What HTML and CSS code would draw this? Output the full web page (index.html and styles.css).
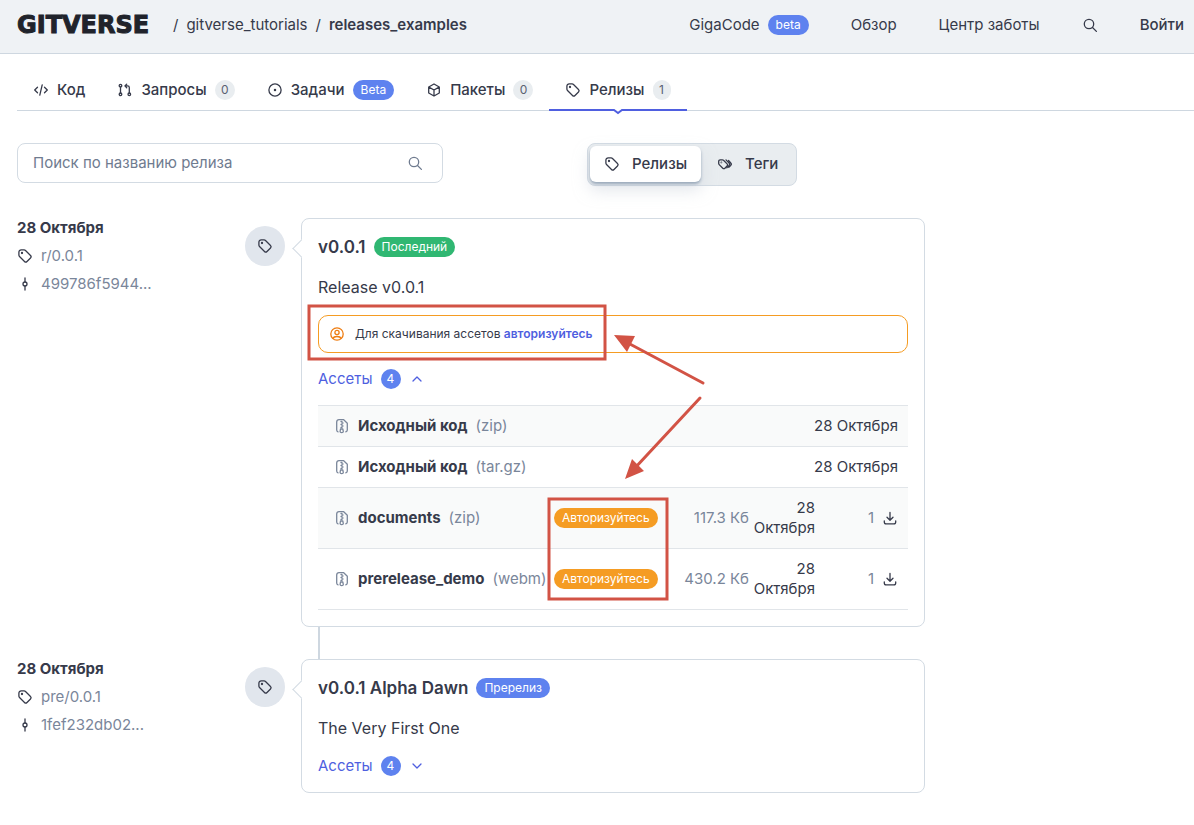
FILE: index.html
```html
<!DOCTYPE html>
<html lang="ru">
<head>
<meta charset="utf-8">
<meta name="viewport" content="width=device-width, initial-scale=1">
<title>releases_examples — Релизы</title>
<link rel="stylesheet" href="styles.css">
</head>
<body>
<svg class="sprite" aria-hidden="true">
  <symbol id="tag" viewBox="0 0 16 16"><path d="M1.900 4.200v2.900c0 .5.2 1 .6 1.400l5 5c.7.7 1.800.7 2.500 0l3.500-3.500c.7-.7.7-1.800 0-2.500l-5-5c-.4-.4-.9-.6-1.400-.6H4.200a2.300 2.300 0 0 0-2.300 2.300z"/><circle cx="5" cy="5" r=".5" fill="currentColor"/></symbol>
  <symbol id="tags" viewBox="0 0 16 16"><path d="M1.700 5.300v2.200c0 .4.200.8.500 1.100l3.600 3.600c.6.6 1.500.6 2.100 0l2.200-2.200c.6-.6.6-1.500 0-2.100L6.500 4.300c-.3-.3-.7-.5-1.100-.5H3.200c-.8 0-1.500.7-1.500 1.500z"/><path d="M9 3.900l3.100 3.200c.7.7.7 1.600 0 2.300l-2.300 2.300M11.500 4.500l2.100 2.200c.9.900.9 2 0 2.900l-1.800 1.800"/><circle cx="4.400" cy="6.400" r=".2"/></symbol>
  <symbol id="search" viewBox="0 0 16 16"><circle cx="7" cy="7" r="4.700"/><path d="M10.500 10.500l3.900 3.900"/></symbol>
  <symbol id="commit" viewBox="0 0 16 16"><circle cx="8" cy="8" r="2"/><path d="M8 2V6M8 10v4"/></symbol>
  <symbol id="archive" viewBox="0 0 16 16"><path d="M4 13.800c-.9-.2-1.300-.9-1.300-1.800V4c0-1.500.9-2.300 2.300-2.300h4.700l3.600 3.500V12c0 1-.4 1.600-1.500 1.900M6.500 11h2.300l.5 2.300c.1.800-.6 1.300-1.600 1.300s-1.700-.5-1.600-1.300z"/><path d="M7 3.500h1M8 5h1M7 6.500h1M8 8h1M7 9.500h1"/></symbol>
  <symbol id="download" viewBox="0 0 16 16"><path d="M8 2.500v7.500M5 7.200l3 3 3-3M2.300 10.800V12c0 1.200.7 1.900 1.900 1.900h7.600c1.200 0 1.900-.7 1.900-1.900v-1.200"/></symbol>
</svg>

<header class="header">
  <nav class="crumbs" aria-label="Путь">
    <a class="logo" href="#">GITVERSE</a>
    <span>/</span>
    <a href="#">gitverse_tutorials</a>
    <span>/</span>
    <a class="current" href="#">releases_examples</a>
  </nav>
  <nav class="menu" aria-label="Меню">
    <a class="with-pill" href="#">GigaCode <span class="pill blue">beta</span></a>
    <a href="#">Обзор</a>
    <a href="#">Центр заботы</a>
    <button class="icon-button" type="button" aria-label="Поиск"><svg class="icon"><use href="#search"/></svg></button>
    <a class="login" href="#">Войти</a>
  </nav>
</header>

<main class="page">
  <nav class="tabs" aria-label="Разделы">
    <a class="tab" href="#"><svg class="icon" viewBox="0 0 16 16"><path d="M4.500 5.200L1.700 8l2.800 2.800M11.500 5.200L14.300 8l-2.800 2.800M9.200 2.900L6.800 13.100"/></svg>Код</a>
    <a class="tab" href="#"><svg class="icon" viewBox="0 0 16 16"><circle cx="3.500" cy="3.700" r="1.300"/><circle cx="3.500" cy="12.300" r="1.300"/><circle cx="12.300" cy="12.300" r="1.300"/><path d="M3.500 5v6M12.300 11V5.600c0-1-.6-1.700-1.700-1.700H8M9.700 2.100L7.900 3.900l1.800 1.800"/></svg>Запросы<span class="count">0</span></a>
    <a class="tab" href="#"><svg class="icon" viewBox="0 0 16 16"><circle cx="8" cy="8" r="6.100"/><circle cx="8" cy="8" r=".6" fill="currentColor"/></svg>Задачи<span class="pill blue">Beta</span></a>
    <a class="tab" href="#"><svg class="icon" viewBox="0 0 16 16"><path d="M8 2l5.300 3v6L8 14l-5.300-3V5zM2.900 5.100L8 8l5.100-2.900M8 8v5.800"/></svg>Пакеты<span class="count">0</span></a>
    <a class="tab active" href="#" aria-current="page"><svg class="icon"><use href="#tag"/></svg>Релизы<span class="count">1</span><svg class="tab-mark" viewBox="0 0 12 6"><path class="mask" d="M1 0h10L6 4z"/><path d="M0 1h2l4 3 4-3h2"/></svg></a>
  </nav>

  <div class="content">
    <div class="toolbar">
      <form class="search">
        <input type="search" aria-label="Поиск по названию релиза" placeholder="Поиск по названию релиза">
        <button class="icon-button" type="button" aria-label="Найти"><svg class="icon"><use href="#search"/></svg></button>
      </form>
      <div class="switch">
        <button class="chosen" type="button"><svg class="icon"><use href="#tag"/></svg>Релизы</button>
        <button type="button"><svg class="icon"><use href="#tags"/></svg>Теги</button>
      </div>
    </div>

    <section class="release">
      <div class="meta">
        <strong>28 Октября</strong>
        <a href="#"><svg class="icon"><use href="#tag"/></svg>r/0.0.1</a>
        <a href="#"><svg class="icon"><use href="#commit"/></svg>499786f5944...</a>
      </div>
      <div class="marker"><svg class="icon"><use href="#tag"/></svg></div>
      <article class="card">
        <h2>v0.0.1 <span class="pill green">Последний</span></h2>
        <p class="text">Release v0.0.1</p>
        <div class="notice">
          <svg class="icon" viewBox="0 0 16 16"><circle cx="8" cy="8" r="6.200"/><circle cx="8" cy="6.500" r="2.100"/><path d="M4 12.500c.5-1.600 1.800-2 4-2s3.500.4 4 2"/></svg>
          <p>Для скачивания ассетов <a href="#">авторизуйтесь</a></p>
        </div>
        <button class="toggle" type="button" aria-expanded="true">Ассеты <span class="round">4</span><svg class="icon" viewBox="0 0 16 16"><path d="M4 10l4-4 4 4"/></svg></button>
        <table class="assets">
          <colgroup><col class="c-name"><col class="c-auth"><col class="c-size"><col class="c-date"><col class="c-load"></colgroup>
          <tbody>
            <tr><td colspan="3"><span class="file"><svg class="icon"><use href="#archive"/></svg><b>Исходный код</b><span>(zip)</span></span></td><td class="wide-date" colspan="2">28 Октября</td></tr>
            <tr><td colspan="3"><span class="file"><svg class="icon"><use href="#archive"/></svg><b>Исходный код</b><span>(tar.gz)</span></span></td><td class="wide-date" colspan="2">28 Октября</td></tr>
            <tr class="tall"><td><span class="file"><svg class="icon"><use href="#archive"/></svg><b>documents</b><span>(zip)</span></span></td><td class="auth"><a class="pill orange" href="#">Авторизуйтесь</a></td><td class="size">117.3 Кб</td><td class="date">28 Октября</td><td><span class="load">1<button class="icon-button" type="button" aria-label="Скачать documents"><svg class="icon"><use href="#download"/></svg></button></span></td></tr>
            <tr class="tall"><td><span class="file"><svg class="icon"><use href="#archive"/></svg><b>prerelease_demo</b><span>(webm)</span></span></td><td class="auth"><a class="pill orange" href="#">Авторизуйтесь</a></td><td class="size">430.2 Кб</td><td class="date">28 Октября</td><td><span class="load">1<button class="icon-button" type="button" aria-label="Скачать prerelease_demo"><svg class="icon"><use href="#download"/></svg></button></span></td></tr>
          </tbody>
        </table>
        <svg class="notes" viewBox="0 0 400 400" aria-hidden="true">
          <rect x="7" y="87" width="296" height="53"/>
          <rect x="247" y="280" width="118" height="100"/>
          <path d="M401 164L326 124M398 179L332 250"/>
          <path class="head" d="M312 116l21 1-8 16zM323 260l7-20 12 12z"/>
        </svg>
      </article>
    </section>

    <section class="release">
      <div class="meta">
        <strong>28 Октября</strong>
        <a href="#"><svg class="icon"><use href="#tag"/></svg>pre/0.0.1</a>
        <a href="#"><svg class="icon"><use href="#commit"/></svg>1fef232db02...</a>
      </div>
      <div class="marker"><svg class="icon"><use href="#tag"/></svg></div>
      <article class="card">
        <h2>v0.0.1 Alpha Dawn <span class="pill blue">Пререлиз</span></h2>
        <p class="text">The Very First One</p>
        <button class="toggle" type="button" aria-expanded="false">Ассеты <span class="round">4</span><svg class="icon" viewBox="0 0 16 16"><path d="M4 6l4 4 4-4"/></svg></button>
      </article>
    </section>
  </div>
</main>
</body>
</html>
```
FILE: styles.css
```css
* { box-sizing: border-box; }

body {
  margin: 0;
  background: #fff;
  color: #363a4a;
  font: 15px/20px Inter, "Noto Sans", sans-serif;
}

a { color: inherit; text-decoration: none; }
h2, p { margin: 0; }
button { padding: 0; border: 0; background: none; color: inherit; font: inherit; cursor: pointer; }

.sprite { display: none; }

.icon {
  flex: none;
  width: 16px;
  height: 16px;
  fill: none;
  stroke: currentColor;
  stroke-width: 1.3;
  stroke-linecap: round;
  stroke-linejoin: round;
}

.icon-button { display: flex; }

.pill {
  display: inline-block;
  padding: 0 8px;
  border-radius: 10px;
  color: #fff;
  font-size: 12px;
  font-weight: 400;
  line-height: 20px;
  vertical-align: top;
}

.blue { background: #5e82ef; }
.green { background: #30b772; }
.orange { background: #f59c23; }

.header {
  display: flex;
  justify-content: space-between;
  height: 54px;
  padding: 15px 10px 0 17px;
  border-bottom: 1px solid #ced7e0;
  background: #eff2f5;
}

.crumbs { display: flex; gap: 8px; height: 20px; white-space: nowrap; }
.logo {
  min-width: 148px;
  color: #20232b;
  font-family: "DejaVu Sans", sans-serif;
  font-size: 24px;
  font-weight: 700;
  -webkit-text-stroke: 1px #20232b;
}
.current { font-weight: 600; }

.menu { display: flex; gap: 42px; height: 20px; white-space: nowrap; }
.menu .icon-button { align-items: center; }
.with-pill { display: flex; gap: 8px; }
.login { font-weight: 500; }

.page { padding: 16px 0 32px 17px; }

.tabs { display: flex; border-bottom: 1px solid #ced7e0; font-weight: 500; }
.tab {
  display: flex;
  align-items: center;
  gap: 8px;
  margin-bottom: -1px;
  padding: 10px 16px 9px;
  border-bottom: 2px solid transparent;
}
.active { position: relative; border-color: #4f5fe0; }
.count {
  min-width: 20px;
  border-radius: 10px;
  background: #e9edf0;
  color: #5a6172;
  font-size: 12px;
  font-weight: 400;
  text-align: center;
}
.active .count { min-width: 18px; }
.tab-mark {
  position: absolute;
  top: 39px;
  left: calc(50% - 6px);
  width: 12px;
  height: 6px;
  fill: none;
  stroke: #4f5fe0;
  stroke-width: 2;
}
.tab-mark .mask { fill: #fff; stroke: none; }

.content { display: flex; flex-direction: column; gap: 32px; max-width: 908px; padding-top: 32px; }

.toolbar { display: flex; align-items: flex-start; gap: 144px; }
.search {
  display: flex;
  align-items: center;
  flex: 0 1 426px;
  height: 40px;
  padding: 0 19px 0 15px;
  border: 1px solid #d3dbe3;
  border-radius: 8px;
  color: #6f7b8f;
}
.search input {
  flex: 1;
  min-width: 0;
  padding: 0;
  border: 0;
  outline: 0;
  background: none;
  color: inherit;
  font: inherit;
}
.search input::placeholder { color: #6f7b8f; opacity: 1; }

.switch {
  display: flex;
  padding: 2px 2px 3px;
  border: 1px solid #d3dbe3;
  border-radius: 8px;
  background: #e9edf0;
}
.switch button {
  display: flex;
  align-items: center;
  gap: 12px;
  height: 36px;
  padding: 0 16px;
  border-radius: 6px;
  font-weight: 500;
}
.switch .chosen { padding: 0 14px; background: #fff; box-shadow: 0 2px 3px #9aa9ba, 0 8px 16px #c5cdd880; }

.release { display: grid; grid-template-columns: 228px 40px minmax(0, 1fr); position: relative; }
.release + .release::before {
  content: "";
  position: absolute;
  top: -32px;
  left: 301px;
  width: 2px;
  height: 32px;
  background: #ced7e0;
}
.meta { display: flex; flex-direction: column; gap: 8px; }
.meta strong { font-weight: 700; }
.meta a { display: flex; align-items: center; gap: 8px; color: #7a869a; }
.meta .icon { color: #363a4a; }
.marker {
  display: flex;
  align-items: center;
  justify-content: center;
  width: 40px;
  height: 40px;
  margin-top: 8px;
  border-radius: 50%;
  background: #e1e6ed;
}

.card {
  position: relative;
  display: flex;
  flex-direction: column;
  align-items: flex-start;
  gap: 16px;
  margin-left: 16px;
  padding: 16px;
  border: 1px solid #d3dbe3;
  border-radius: 8px;
}
.card::before {
  content: "";
  position: absolute;
  top: 23px;
  left: -7px;
  width: 12px;
  height: 12px;
  border: solid #d3dbe3;
  border-width: 0 0 1px 1px;
  background: #fff;
  transform: rotate(45deg);
}
.card h2 { display: flex; align-items: center; gap: 8px; font-size: 17px; font-weight: 600; line-height: 24px; }
.text { font-size: 16px; line-height: 24px; }

.notice {
  display: flex;
  align-items: center;
  align-self: stretch;
  gap: 10px;
  height: 38px;
  padding: 0 10px;
  border: 1px solid #f59c23;
  border-radius: 10px;
  font-size: 12px;
}
.notice .icon { color: #ee7d12; }
.notice a { color: #4f5fe0; font-weight: 600; }

.toggle { display: flex; align-items: center; gap: 8px; color: #4f5fe0; }
.round {
  width: 20px;
  border-radius: 10px;
  background: #5e82ef;
  color: #fff;
  font-size: 12px;
  text-align: center;
}

.assets { width: 100%; border-collapse: separate; border-spacing: 0; border-top: 1px solid #e1e5e9; table-layout: fixed; }
.c-name { width: 232px; }
.c-auth { width: 114px; }
.c-size { width: 87px; }
.c-date { width: 66px; }
.assets td { height: 41px; padding: 0; border-bottom: 1px solid #e1e5e9; }
.assets .tall td { height: 61px; }
.assets tr:nth-child(odd) { background: #f9fafa; }
.assets .wide-date { padding-right: 10px; text-align: right; }
.assets .auth { padding-left: 4px; }
.assets .size { padding-right: 2px; color: #7a869a; text-align: right; }
.assets .date { padding-right: 2px; text-align: right; }
.file { display: flex; align-items: center; gap: 8px; padding-left: 16px; color: #7a869a; white-space: nowrap; }
.file b { color: #363a4a; font-weight: 700; }
.load { display: flex; align-items: center; justify-content: flex-end; gap: 8px; padding-right: 10px; color: #7a869a; }
.load .icon { color: #363a4a; }

.notes {
  position: absolute;
  top: 0;
  left: 0;
  width: 400px;
  height: 400px;
  overflow: visible;
  fill: none;
  stroke: #d25345;
  stroke-width: 3;
  stroke-linecap: round;
  pointer-events: none;
}
.notes .head { fill: #d25345; stroke: none; }
```
